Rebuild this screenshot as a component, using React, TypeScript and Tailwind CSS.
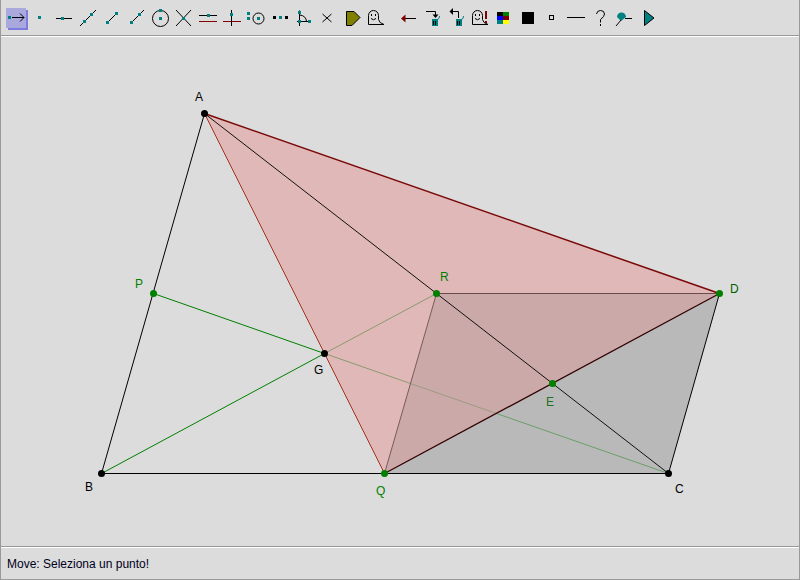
import type { ReactNode } from "react";

const TEAL = "#008080";
const MAROON = "#800000";

// small teal handle, centred on cx/cy
function H({ x, y, c = TEAL }: { x: number; y: number; c?: string }) {
  return <rect x={Math.round(x - 1.5)} y={Math.round(y - 1.5)} width={3} height={3} fill={c} />;
}

function L({ d, c = "#000", w = 1 }: { d: string; c?: string; w?: number }) {
  return <path d={d} stroke={c} strokeWidth={w} fill="none" />;
}

function Ghost({ x }: { x: number }) {
  return (
    <g>
      <path
        d={`M${x + 0.5} 24.5 V15.5 a5 5 0 0 1 10 0 V19.5 Q${x + 11} 23 ${x + 16} 24.5 Z`}
        stroke="#000"
        fill="#dcdcdc"
      />
      <rect x={x + 3} y={14} width={1} height={2} fill="#000" />
      <rect x={x + 7} y={14} width={1} height={2} fill="#000" />
      <path d={`M${x + 3} 18.5 Q${x + 5.5} 21 ${x + 8} 18.5`} stroke="#000" fill="none" />
    </g>
  );
}

function Trash({ x }: { x: number }) {
  return (
    <g>
      <rect x={x} y={19} width={6} height={7} fill={TEAL} />
      <rect x={x + 1} y={21} width={1} height={4} fill="#000" />
      <rect x={x + 3} y={21} width={1} height={4} fill="#000" />
      <path d={`M${x + 5.5} 19.5 Q${x + 7.5} 19 ${x + 7.5} 16`} stroke={TEAL} fill="none" />
    </g>
  );
}

const tools: { x: number; draw: ReactNode }[] = [
  {
    x: 4,
    draw: (
      <>
        <rect x={8} y={10} width={20} height={20} fill="#7b7be0" />
        <rect x={6} y={8} width={20} height={20} fill="#a9a9dd" />
        <H x={9.5} y={17.5} />
        <L d="M12 17.5 H24 M20 13.5 L24 17.5 L20 21.5" />
      </>
    ),
  },
  { x: 28, draw: <H x={39.5} y={17.5} /> },
  {
    x: 52,
    draw: (
      <>
        <L d="M56 18.5 H72" />
        <H x={62.5} y={18.5} />
      </>
    ),
  },
  {
    x: 76,
    draw: (
      <>
        <L d="M80 26 L96 10" />
        <H x={84.5} y={21.5} />
        <H x={91.5} y={14.5} />
      </>
    ),
  },
  {
    x: 100,
    draw: (
      <>
        <L d="M107.5 22.5 L116.5 13.5" />
        <H x={107.5} y={22.5} />
        <H x={116.5} y={13.5} />
      </>
    ),
  },
  {
    x: 124,
    draw: (
      <>
        <L d="M131.5 22.5 L144 10" />
        <H x={131.5} y={22.5} />
        <H x={139.5} y={14.5} />
      </>
    ),
  },
  {
    x: 148,
    draw: (
      <>
        <circle cx={160.5} cy={18.5} r={8} stroke="#000" fill="none" />
        <H x={160.5} y={18.5} />
        <H x={160.5} y={10.5} />
      </>
    ),
  },
  {
    x: 172,
    draw: (
      <>
        <L d="M176 10 L191 26 M191 10 L176 26" />
        <H x={183.5} y={18.5} />
      </>
    ),
  },
  {
    x: 196,
    draw: (
      <>
        <L d="M199 15.5 H217" />
        <L d="M199 21.5 H217" c={MAROON} />
        <H x={208.5} y={15.5} />
      </>
    ),
  },
  {
    x: 220,
    draw: (
      <>
        <L d="M223 21.5 H241" c={MAROON} />
        <L d="M231.5 10 V26" />
        <H x={231.5} y={14.5} />
      </>
    ),
  },
  {
    x: 244,
    draw: (
      <>
        <circle cx={258.5} cy={18.5} r={5.5} stroke="#000" fill="none" />
        <H x={248.5} y={13.5} />
        <H x={248.5} y={18.5} />
        <H x={258.5} y={18.5} />
      </>
    ),
  },
  {
    x: 268,
    draw: (
      <>
        <H x={274.5} y={17.5} c="#000" />
        <H x={280.5} y={17.5} />
        <H x={286.5} y={17.5} c="#000" />
      </>
    ),
  },
  {
    x: 292,
    draw: (
      <>
        <L d="M299.5 10.5 V26 M297 21.5 H310 M299.5 15 Q306 15.5 306.5 21.5" />
        <H x={299.5} y={12.5} />
        <H x={299.5} y={21.5} />
        <H x={309.5} y={21.5} />
      </>
    ),
  },
  { x: 316, draw: <L d="M322.5 14 L331.5 22 M331.5 14 L322.5 22" /> },
  {
    x: 340,
    draw: <path d="M346.5 11.5 H354 L360 17.5 L352 25.5 H346.5 Z" fill="#808000" stroke="#000" />,
  },
  { x: 364, draw: <Ghost x={368} /> },
  {
    x: 396,
    draw: (
      <>
        <L d="M403 18.5 H416" />
        <path d="M401 18.5 L405.5 14.5 V22.5 Z" fill={MAROON} />
      </>
    ),
  },
  {
    x: 420,
    draw: (
      <>
        <L d="M426 11.5 H435.5 V15" />
        <path d="M432.5 14.5 H438.5 L435.5 18 Z" fill="#000" />
        <Trash x={432} />
      </>
    ),
  },
  {
    x: 444,
    draw: (
      <>
        <L d="M452 11.5 H458.5 V18" />
        <path d="M453 8 V15 L449.5 11.5 Z" fill="#000" />
        <Trash x={456} />
      </>
    ),
  },
  {
    x: 468,
    draw: (
      <>
        <Ghost x={472} />
        <rect x={485} y={11} width={2} height={8} fill={MAROON} />
        <rect x={485} y={21} width={2} height={2} fill={MAROON} />
      </>
    ),
  },
  {
    x: 492,
    draw: (
      <>
        <rect x={497} y={12} width={6} height={4} fill="#000" />
        <rect x={503} y={12} width={6} height={4} fill="#008000" />
        <rect x={497} y={16} width={6} height={4} fill="#0000ff" />
        <rect x={503} y={16} width={6} height={4} fill={MAROON} />
        <rect x={497} y={20} width={6} height={4} fill={TEAL} />
        <rect x={503} y={20} width={6} height={4} fill="#ffff00" />
      </>
    ),
  },
  { x: 516, draw: <rect x={522} y={12} width={12} height={12} fill="#000" /> },
  { x: 540, draw: <rect x={549.5} y={15.5} width={4} height={4} stroke="#000" fill="none" /> },
  { x: 564, draw: <L d="M567 17.5 H585" /> },
  {
    x: 588,
    draw: (
      <>
        <L d="M596.5 14 Q597 10.5 600.5 10.5 Q604.5 10.5 604.5 14 Q604.5 16.5 600.5 19.5 V22.5" />
        <rect x={600} y={24} width={1} height={2} fill="#000" />
      </>
    ),
  },
  {
    x: 612,
    draw: (
      <>
        <path d="M617 17 a4.5 4.5 0 1 1 9 0 L621 21 Z" fill={TEAL} />
        <L d="M625 18.5 H632 M616 26 L621 20" />
      </>
    ),
  },
  {
    x: 636,
    draw: <path d="M644.5 10.5 L654 18 L644.5 25.5 Z" fill={TEAL} stroke="#000" />,
  },
];

const labels = [
  { t: "A", x: 195, y: 101, c: "#000" },
  { t: "B", x: 85, y: 491, c: "#000" },
  { t: "C", x: 675, y: 493, c: "#000" },
  { t: "D", x: 730, y: 293, c: "#006000" },
  { t: "E", x: 546, y: 406, c: "#207020" },
  { t: "G", x: 314, y: 374, c: "#000" },
  { t: "P", x: 135, y: 288, c: "#008000" },
  { t: "Q", x: 376, y: 495, c: "#008000" },
  { t: "R", x: 440, y: 281, c: "#008000" },
];

const black = [
  { x: 204, y: 113 },
  { x: 101, y: 473 },
  { x: 668, y: 473 },
  { x: 324, y: 353 },
];

const green = [
  { x: 153, y: 293 },
  { x: 436, y: 293 },
  { x: 384, y: 473 },
  { x: 552, y: 383 },
  { x: 719, y: 293 },
];

export default function App() {
  return (
    <div
      className="box-border flex h-[580px] w-[800px] flex-col border-x border-b border-[#999999] bg-[#dcdcdc]"
      style={{ fontFamily: '"Liberation Sans", Arial, sans-serif' }}
    >
      <div className="flex h-9 shrink-0 items-start border-b border-[#999999] pl-[3px] pt-[6px]">
        {tools.map((tool) => (
          <svg
            key={tool.x}
            viewBox={`${tool.x} 6 24 24`}
            className={`h-6 w-6 shrink-0 overflow-visible ${tool.x === 396 ? "ml-2" : ""}`}
          >
            {tool.draw}
          </svg>
        ))}
      </div>

      <div className="h-[511px] shrink-0 border-y border-t-white border-b-[#999999]">
        <svg viewBox="1 37 798 509" className="block h-[509px] w-[798px]">
          <g transform="translate(0.5 0.5)">
            <polygon points="384,473 668,473 719,293" fill="#b9b9b9" />
            <polygon points="204,113 384,473 719,293" fill="#e0b8b8" />
            <polygon points="436,293 384,473 719,293" fill="#cca9a9" />

            <path d="M101 473 L324 353 M153 293 L324 353" stroke="#008000" />
            <path d="M324 353 L436 293 M324 353 L410 383" stroke="#8a9a70" />
            <path d="M410 383 L496 413" stroke="#9a9c80" />
            <path d="M496 413 L668 473" stroke="#6aa06a" />

            <path d="M204 113 L101 473 L668 473 L719 293" stroke="#000" fill="none" />
            <path d="M204 113 L668 473" stroke="#101010" />
            <path d="M436 293 L719 293" stroke="#6a4a4a" />
            <path d="M436 293 L384 473" stroke="#7a5a5a" />
            <path d="M204 113 L384 473" stroke="#a03020" />
            <path d="M204 113 L719 293" stroke="#7a0808" strokeWidth={1.5} />
            <path d="M384 473 L719 293" stroke="#300000" strokeWidth={1.3} />

            {black.map((p) => (
              <circle key={p.x} cx={p.x} cy={p.y} r={3.5} fill="#000" />
            ))}
            {green.map((p) => (
              <circle key={p.x} cx={p.x} cy={p.y} r={3.5} fill="#008000" />
            ))}
          </g>
          {labels.map((l) => (
            <text key={l.t} x={l.x} y={l.y} fill={l.c} fontSize={12}>
              {l.t}
            </text>
          ))}
        </svg>
      </div>

      <div className="flex min-h-0 flex-1 items-center border-t border-white pl-[6px] text-[12px] text-[#000020]">
        Move: Seleziona un punto!
      </div>
    </div>
  );
}
